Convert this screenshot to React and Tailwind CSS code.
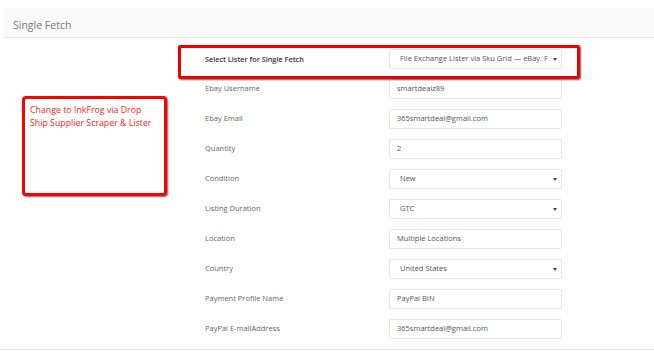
import React from "react";

const Caret = () => (
  <svg width="4" height="3" viewBox="0 0 4 3" className="shrink-0">
    <path d="M0 0 L4 0 L2 3 Z" fill="#444" />
  </svg>
);

function Field({ label, value, select, bold }) {
  return (
    <div className="flex h-[30px] shrink-0 items-center">
      <div
        className={
          "w-[184px] shrink-0 " +
          (bold ? "text-[7.3px] font-semibold text-[#333]" : "text-[7.5px] text-[#666]")
        }
      >
        {label}
      </div>
      <div
        className={
          "flex h-[20px] w-[173px] items-center rounded-[2px] border border-[#e6e6e6] bg-white text-[7.5px] text-[#555] " +
          (select ? "pl-[10px] pr-[4px]" : "pl-[7px] pr-[4px]")
        }
      >
        <div className="min-w-0 flex-1 whitespace-nowrap">{value}</div>
        {select && <Caret />}
      </div>
    </div>
  );
}

export default function App() {
  const rows = [
    { label: "Select Lister for Single Fetch", value: "File Exchange Lister via Sku Grid — eBay. F", select: true, bold: true },
    { label: "Ebay Username", value: "smartdealz89" },
    { label: "Ebay Email", value: "365smartdeal@gmail.com" },
    { label: "Quantity", value: "2" },
    { label: "Condition", value: "New", select: true },
    { label: "Listing Duration", value: "GTC", select: true },
    { label: "Location", value: "Multiple Locations" },
    { label: "Country", value: "United States", select: true },
    { label: "Payment Profile Name", value: "PayPal BIN" },
    { label: "PayPal E-mailAddress", value: "365smartdeal@gmail.com" },
    { label: "", value: "" },
  ];
  return (
    <div
      className="relative h-[351px] w-[654px] overflow-hidden bg-white"
      style={{ fontFamily: '"Open Sans", "Noto Sans", sans-serif' }}
    >
      <div className="h-[8px]" />
      <div className="ml-[4px] flex h-[30px] items-center border-b border-[#e6e6e6] bg-[#fafafa] pl-[9px] pt-[7px] text-[10.5px] text-[#777]">
        Single Fetch
      </div>
      <div className="flex h-[311px] overflow-hidden">
        <div className="w-[205px] shrink-0 pl-[22px] pt-[58px]">
          <div className="h-[100px] w-[145px] rounded-[4px] border-[3px] border-[#ff0000] bg-white px-[5px] pt-[5px] text-[8.8px] leading-[13px] text-[#ff1a1a] shadow-[1px_1px_2px_rgba(0,0,0,0.6)]">
            Change to InkFrog via Drop Ship Supplier Scraper &amp; Lister
          </div>
        </div>
        <div className="flex flex-col pt-[6px]">
          {rows.map((r, i) => (
            <Field key={i} {...r} />
          ))}
        </div>
      </div>
      <div className="h-[1px] bg-[#e6e6e6]" />
      <div className="absolute left-[178px] top-[45px] h-[34px] w-[402px] rounded-[2px] border-[3px] border-[#ee0000] shadow-[1px_1px_2px_rgba(0,0,0,0.6)]" />
    </div>
  );
}
